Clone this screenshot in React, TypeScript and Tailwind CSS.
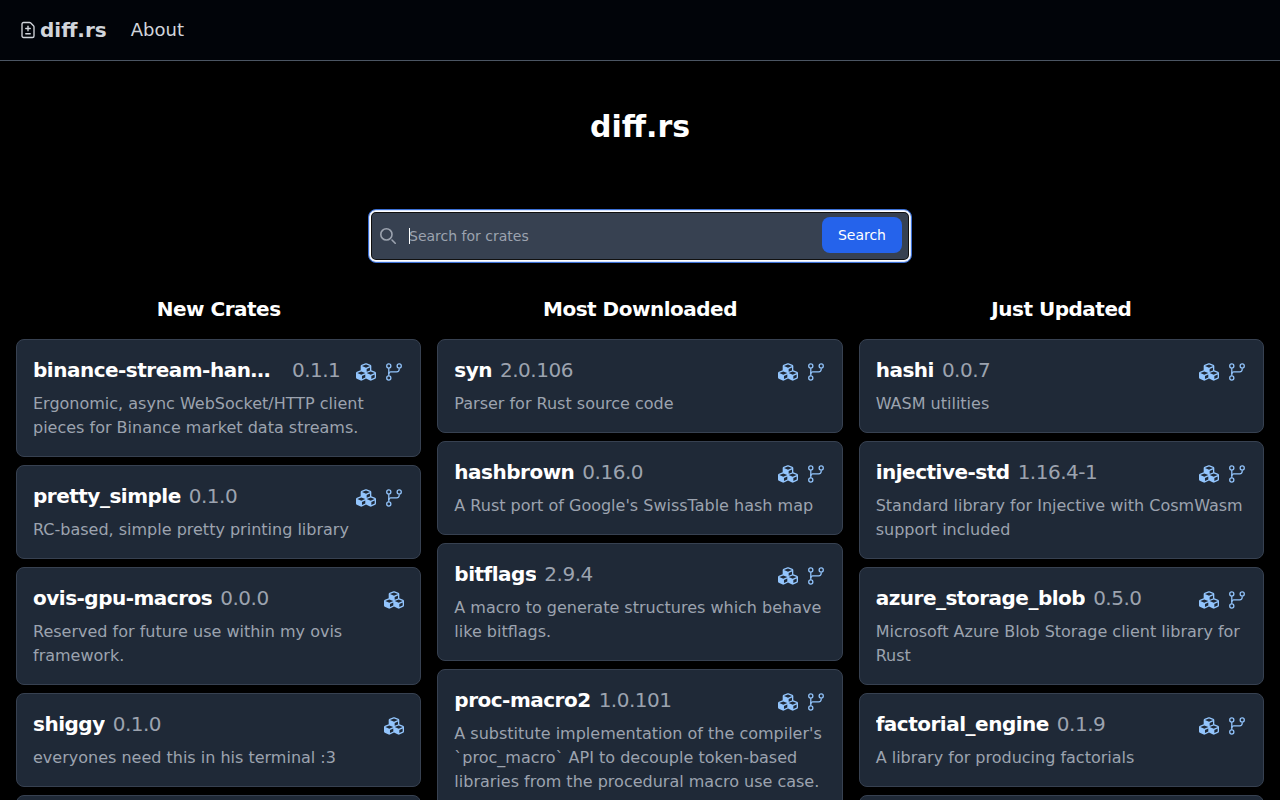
import { FileDiff } from "lucide-react";
import { GoGitBranch } from "react-icons/go";
import { FaCubes } from "react-icons/fa";

type Crate = { name: string; version: string; text: string; repo?: boolean };

const columns: { title: string; crates: Crate[] }[] = [
  {
    title: "New Crates",
    crates: [
      { name: "binance-stream-handler", version: "0.1.1", text: "Ergonomic, async WebSocket/HTTP client pieces for Binance market data streams.", repo: true },
      { name: "pretty_simple", version: "0.1.0", text: "RC-based, simple pretty printing library", repo: true },
      { name: "ovis-gpu-macros", version: "0.0.0", text: "Reserved for future use within my ovis framework." },
      { name: "shiggy", version: "0.1.0", text: "everyones need this in his terminal :3" },
      { name: "", version: "", text: "" },
    ],
  },
  {
    title: "Most Downloaded",
    crates: [
      { name: "syn", version: "2.0.106", text: "Parser for Rust source code", repo: true },
      { name: "hashbrown", version: "0.16.0", text: "A Rust port of Google's SwissTable hash map", repo: true },
      { name: "bitflags", version: "2.9.4", text: "A macro to generate structures which behave like bitflags.", repo: true },
      { name: "proc-macro2", version: "1.0.101", text: "A substitute implementation of the compiler's `proc_macro` API to decouple token-based libraries from the procedural macro use case.", repo: true },
    ],
  },
  {
    title: "Just Updated",
    crates: [
      { name: "hashi", version: "0.0.7", text: "WASM utilities", repo: true },
      { name: "injective-std", version: "1.16.4-1", text: "Standard library for Injective with CosmWasm support included", repo: true },
      { name: "azure_storage_blob", version: "0.5.0", text: "Microsoft Azure Blob Storage client library for Rust", repo: true },
      { name: "factorial_engine", version: "0.1.9", text: "A library for producing factorials", repo: true },
      { name: "", version: "", text: "" },
    ],
  },
];

function CrateCard({ crate }: { crate: Crate }) {
  return (
    <article className="min-h-[94px] rounded-lg border border-[#374151] bg-[#1f2937] p-4">
      {crate.name && (
        <>
          <div className="mb-2 flex h-7 items-center">
            <h3 className="truncate text-xl font-bold tracking-tight text-white">{crate.name}</h3>
            <span className="ml-2 text-xl tracking-tight text-[#9ca3af]">{crate.version}</span>
            <div className="ml-auto flex shrink-0 gap-2 pl-4 pt-1 text-[#93c5fd]">
              <FaCubes size={20} />
              {crate.repo && <GoGitBranch size={20} />}
            </div>
          </div>
          <p className="text-base text-[#9ca3af]">{crate.text}</p>
        </>
      )}
    </article>
  );
}

export default function App() {
  return (
    <div className="h-screen overflow-hidden bg-black font-['DejaVu_Sans',sans-serif]">
      <header className="flex h-[61px] items-center border-b border-[#4b5563] bg-[#010409] px-5 text-[#d1d5db]">
        <a className="flex items-center gap-1 text-xl font-bold">
          <FileDiff className="-mx-px size-[18px]" strokeWidth={1.8} />
          diff.rs
        </a>
        <a className="ml-6 text-lg">About</a>
      </header>
      <main>
        <h1 className="pt-12 text-center text-3xl font-bold text-white">diff.rs</h1>
        <form className="relative mx-auto mt-16 w-[544px]">
          <svg className="absolute left-3 top-[19px] size-4 text-[#9ca3af]" fill="none" stroke="currentColor" strokeWidth="2" strokeLinecap="round" strokeLinejoin="round" viewBox="0 0 20 20">
            <path d="m19 19-4-4m0-7A7 7 0 1 1 1 8a7 7 0 0 1 14 0Z" />
          </svg>
          <input
            placeholder="Search for crates"
            className="block h-[54px] w-full rounded-lg border border-[#3b6fd4] bg-[#374151] p-4 pl-10 text-sm text-white shadow-[inset_0_0_0_1px_#d6e4ff,inset_0_0_0_2px_#ffffff,inset_0_0_0_3px_#101010] outline-none placeholder:text-[#9ca3af]"
          />
          <span className="absolute left-[41px] top-[19px] h-4 w-px bg-white" />
          <button type="button" className="absolute bottom-2.5 right-2.5 rounded-lg bg-[#2563eb] px-4 py-2 text-sm text-white">Search</button>
        </form>
        <div className="grid grid-cols-3 gap-4 px-4 pt-8">
          {columns.map((column) => (
            <section key={column.title} className="flex min-w-0 flex-col gap-2">
              <h2 className="mb-2 text-center text-xl font-bold tracking-tight text-white">{column.title}</h2>
              {column.crates.map((crate, i) => (
                <CrateCard key={i} crate={crate} />
              ))}
            </section>
          ))}
        </div>
      </main>
    </div>
  );
}
